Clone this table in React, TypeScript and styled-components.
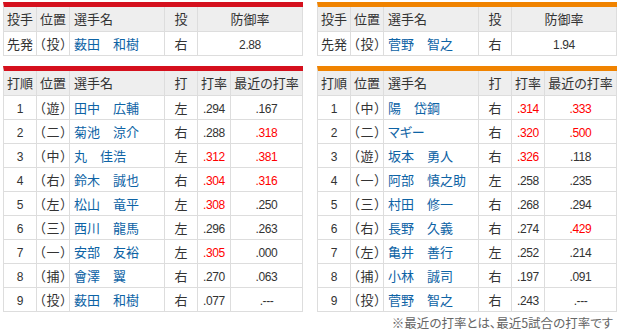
import styled, { createGlobalStyle } from "styled-components";

const GlobalStyle = createGlobalStyle`
  body {
    margin: 0;
    background: #fff;
    font-family: "Noto Sans CJK JP", "Noto Sans", sans-serif;
    color: #333;
  }
`;

type Batter = {
  order: number;
  pos: string;
  name: string;
  hand: string;
  avg: string;
  recent: string;
  avgHot?: boolean;
  recentHot?: boolean;
};

type Team = {
  color: string;
  pitcher: { name: string; hand: string; era: string };
  lineup: Batter[];
};

const carp: Team = {
  color: "#d5101d",
  pitcher: { name: "薮田　和樹", hand: "右", era: "2.88" },
  lineup: [
    { order: 1, pos: "遊", name: "田中　広輔", hand: "左", avg: ".294", recent: ".167" },
    { order: 2, pos: "二", name: "菊池　涼介", hand: "右", avg: ".288", recent: ".318", recentHot: true },
    { order: 3, pos: "中", name: "丸　佳浩", hand: "左", avg: ".312", recent: ".381", avgHot: true, recentHot: true },
    { order: 4, pos: "右", name: "鈴木　誠也", hand: "右", avg: ".304", recent: ".316", avgHot: true, recentHot: true },
    { order: 5, pos: "左", name: "松山　竜平", hand: "左", avg: ".308", recent: ".250", avgHot: true },
    { order: 6, pos: "三", name: "西川　龍馬", hand: "左", avg: ".296", recent: ".263" },
    { order: 7, pos: "一", name: "安部　友裕", hand: "左", avg: ".305", recent: ".000", avgHot: true },
    { order: 8, pos: "捕", name: "會澤　翼", hand: "右", avg: ".270", recent: ".063" },
    { order: 9, pos: "投", name: "薮田　和樹", hand: "右", avg: ".077", recent: ".---" },
  ],
};

const giants: Team = {
  color: "#f08300",
  pitcher: { name: "菅野　智之", hand: "右", era: "1.94" },
  lineup: [
    { order: 1, pos: "中", name: "陽　岱鋼", hand: "右", avg: ".314", recent: ".333", avgHot: true, recentHot: true },
    { order: 2, pos: "二", name: "マギー", hand: "右", avg: ".320", recent: ".500", avgHot: true, recentHot: true },
    { order: 3, pos: "遊", name: "坂本　勇人", hand: "右", avg: ".326", recent: ".118", avgHot: true },
    { order: 4, pos: "一", name: "阿部　慎之助", hand: "左", avg: ".258", recent: ".235" },
    { order: 5, pos: "三", name: "村田　修一", hand: "右", avg: ".268", recent: ".294" },
    { order: 6, pos: "右", name: "長野　久義", hand: "右", avg: ".274", recent: ".429", recentHot: true },
    { order: 7, pos: "左", name: "亀井　善行", hand: "左", avg: ".252", recent: ".214" },
    { order: 8, pos: "捕", name: "小林　誠司", hand: "右", avg: ".197", recent: ".091" },
    { order: 9, pos: "投", name: "菅野　智之", hand: "右", avg: ".243", recent: ".---" },
  ],
};

const Page = styled.div`
  width: 614px;
  padding: 2px 0 0 3px;
`;

const Columns = styled.div`
  display: grid;
  grid-template-columns: 300px 300px;
  column-gap: 14px;
`;

const TeamColumn = styled.div`
  display: flex;
  flex-direction: column;
  gap: 10px;
`;

const Table = styled.div<{ $color: string; $cols: string }>`
  display: grid;
  grid-template-columns: ${({ $cols }) => $cols};
  border-top: 5px solid ${({ $color }) => $color};
  border-left: 1px solid #ddd;
`;

const Cell = styled.div<{ $head?: boolean; $left?: boolean }>`
  height: ${({ $head }) => ($head ? "24px" : "23px")};
  line-height: ${({ $head }) => ($head ? "24px" : "23px")};
  border-right: 1px solid #ddd;
  border-bottom: 1px solid #ddd;
  background: ${({ $head }) => ($head ? "#eee" : "#fff")};
  text-align: ${({ $left }) => ($left ? "left" : "center")};
  padding-left: ${({ $left }) => ($left ? "4px" : "0")};
  font-size: 13px;
  font-feature-settings: "palt";
  white-space: nowrap;
  overflow: hidden;
`;

const Pos = styled.span`
  letter-spacing: 1px;
  margin-right: -1px;
`;

const Name = styled.span`
  color: #0d63a5;
`;

const Num = styled.span<{ $hot?: boolean }>`
  font-family: "Liberation Sans", Arial, sans-serif;
  font-size: 12px;
  letter-spacing: -0.4px;
  color: ${({ $hot }) => ($hot ? "#f00" : "#333")};
`;

const Note = styled.div`
  text-align: right;
  padding-right: 4px;
  margin-top: 2px;
  font-size: 12.5px;
  font-feature-settings: "palt";
  line-height: 18px;
  color: #666;
`;

const PITCH_COLS = "33px 33px 95px 33px 105px";
const BAT_COLS = "33px 33px 95px 33px 33px 72px";

function PitcherTable({ team }: { team: Team }) {
  return (
    <Table $color={team.color} $cols={PITCH_COLS}>
      <Cell $head>投手</Cell>
      <Cell $head>位置</Cell>
      <Cell $head $left>選手名</Cell>
      <Cell $head>投</Cell>
      <Cell $head>防御率</Cell>
      <Cell>先発</Cell>
      <Cell>
        <Pos>（投）</Pos>
      </Cell>
      <Cell $left>
        <Name>{team.pitcher.name}</Name>
      </Cell>
      <Cell>{team.pitcher.hand}</Cell>
      <Cell>
        <Num>{team.pitcher.era}</Num>
      </Cell>
    </Table>
  );
}

function LineupTable({ team }: { team: Team }) {
  return (
    <Table $color={team.color} $cols={BAT_COLS}>
      <Cell $head>打順</Cell>
      <Cell $head>位置</Cell>
      <Cell $head $left>選手名</Cell>
      <Cell $head>打</Cell>
      <Cell $head>打率</Cell>
      <Cell $head>最近の打率</Cell>
      {team.lineup.map((b) => [
        <Cell key={`o${b.order}`}>
          <Num>{b.order}</Num>
        </Cell>,
        <Cell key={`p${b.order}`}>
          <Pos>（{b.pos}）</Pos>
        </Cell>,
        <Cell key={`n${b.order}`} $left>
          <Name>{b.name}</Name>
        </Cell>,
        <Cell key={`h${b.order}`}>{b.hand}</Cell>,
        <Cell key={`a${b.order}`}>
          <Num $hot={b.avgHot}>{b.avg}</Num>
        </Cell>,
        <Cell key={`r${b.order}`}>
          <Num $hot={b.recentHot}>{b.recent}</Num>
        </Cell>,
      ])}
    </Table>
  );
}

export default function App() {
  return (
    <Page>
      <GlobalStyle />
      <Columns>
        {[carp, giants].map((team, i) => (
          <TeamColumn key={i}>
            <PitcherTable team={team} />
            <LineupTable team={team} />
          </TeamColumn>
        ))}
      </Columns>
      <Note>※最近の打率とは、最近5試合の打率です</Note>
    </Page>
  );
}
